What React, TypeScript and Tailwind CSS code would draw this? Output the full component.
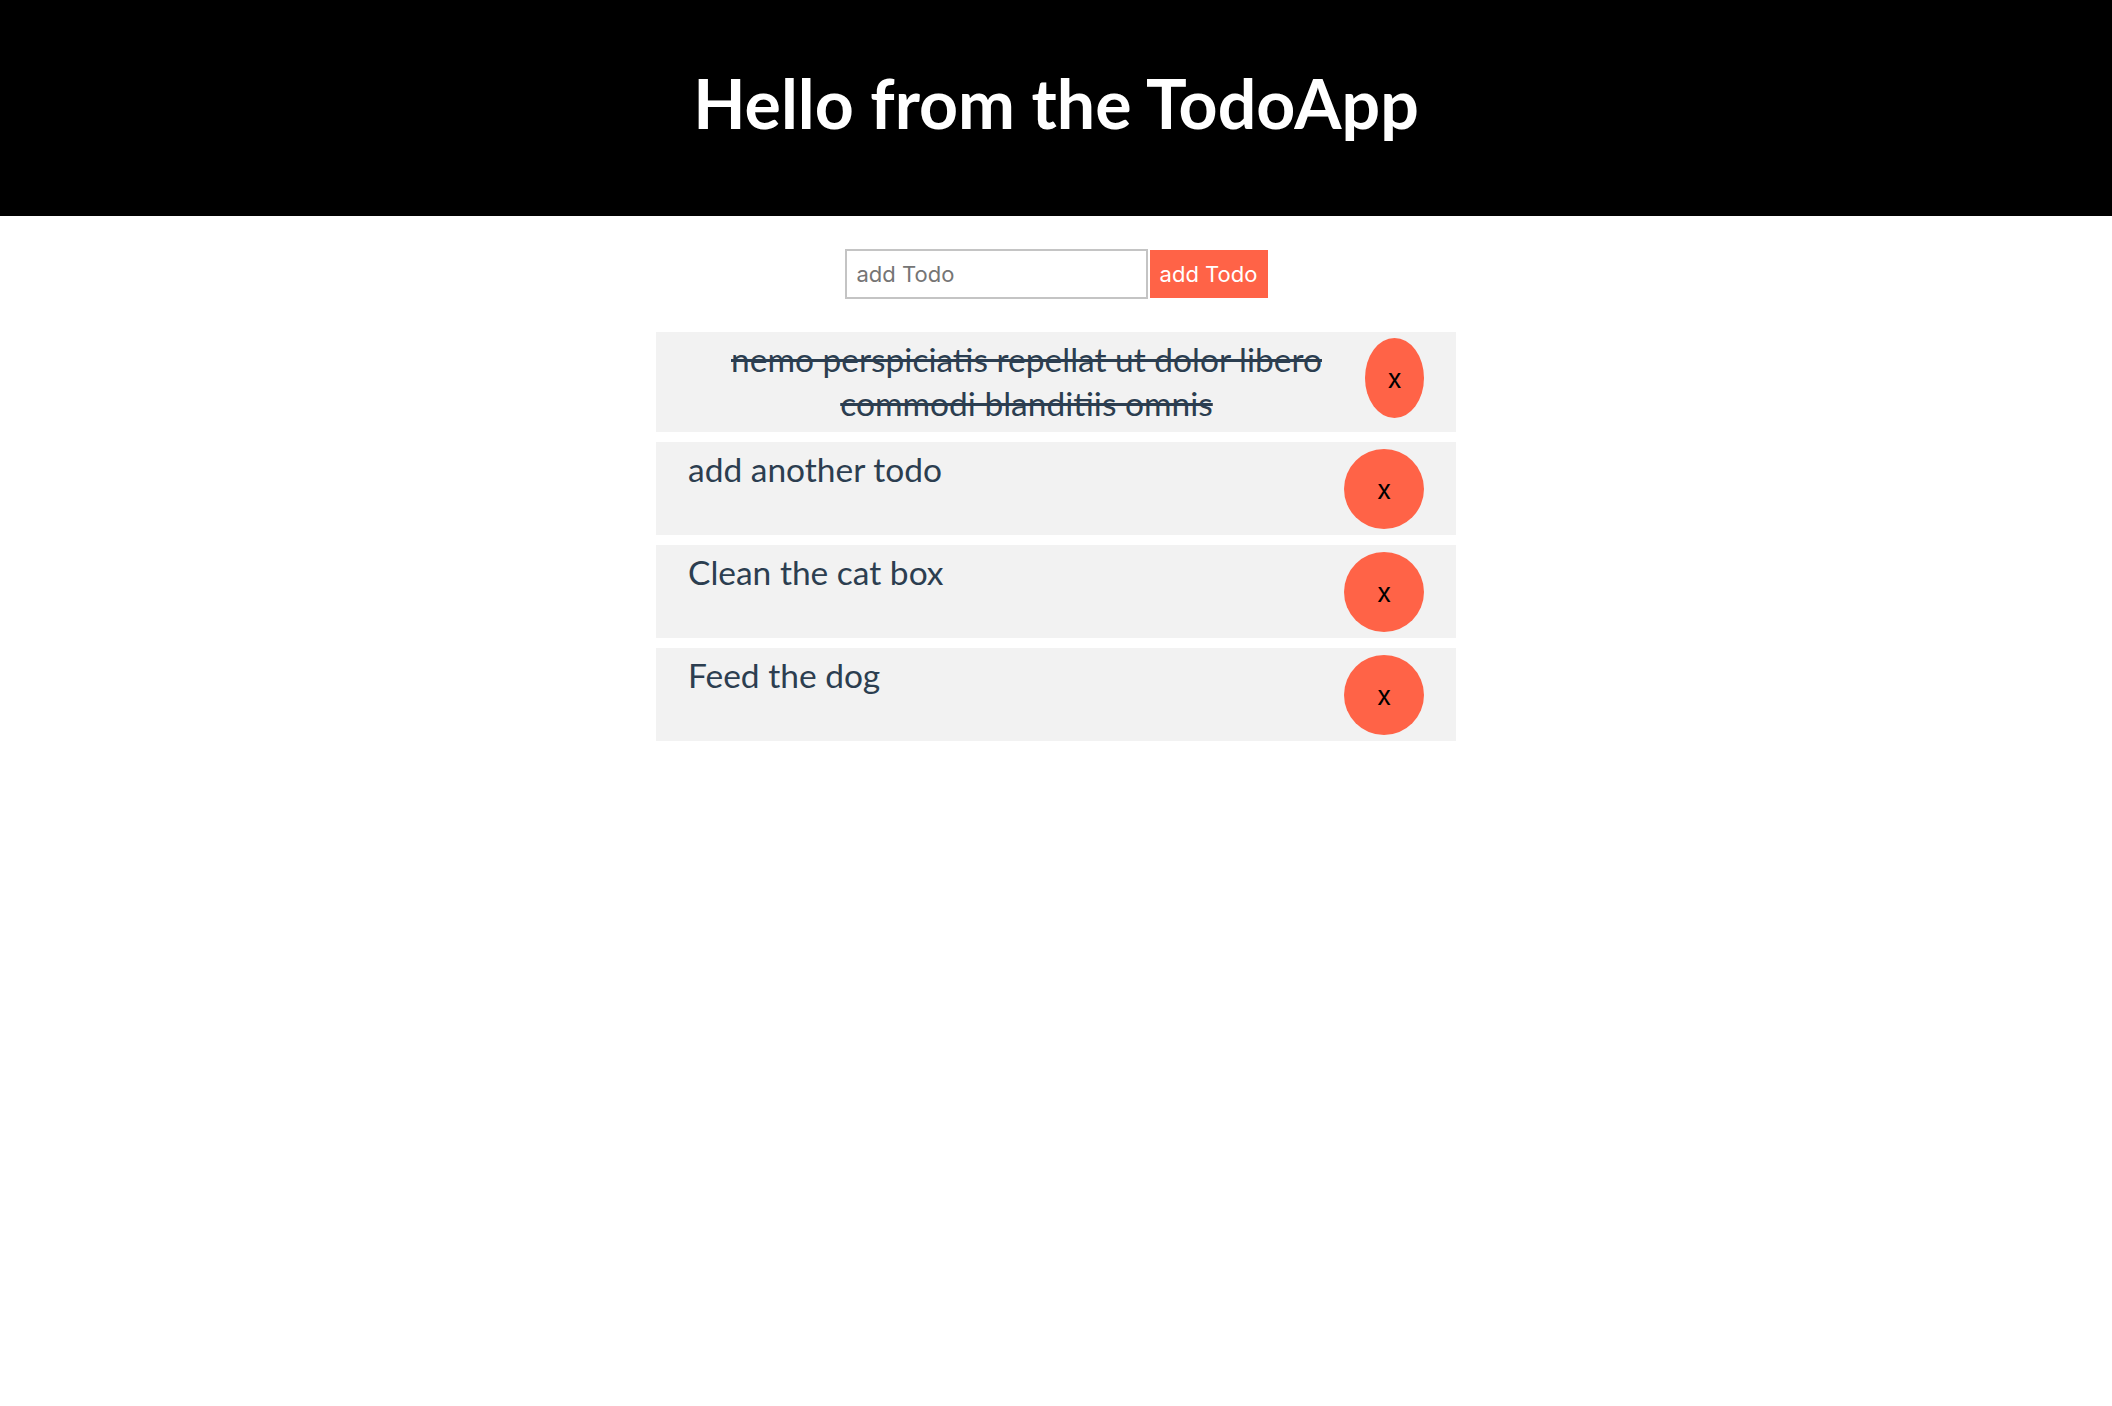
import React, { useState } from 'react'

type Todo = {
  id: number
  title: string
  completed: boolean
}

const App = () => {
  const [todos, setTodos] = useState<Todo[]>([
    { id: 1, title: 'nemo perspiciatis repellat ut dolor libero commodi blanditiis omnis', completed: true },
    { id: 2, title: 'add another todo', completed: false },
    { id: 3, title: 'Clean the cat box', completed: false },
    { id: 4, title: 'Feed the dog', completed: false },
  ])
  const [title, setTitle] = useState('')

  const addTodo = (e: React.FormEvent) => {
    e.preventDefault()
    if (!title) return
    setTodos([...todos, { id: Date.now(), title, completed: false }])
    setTitle('')
  }

  const removeTodo = (id: number) => {
    setTodos(todos.filter((t) => t.id !== id))
  }

  return (
    <div className="min-h-screen bg-white text-[#2c3e50] font-['Lato',sans-serif]">
      <header className="h-[216px] bg-black flex justify-center pt-[71px]">
        <h1 className="text-white text-[68px] leading-[64px] font-bold">Hello from the TodoApp</h1>
      </header>

      <form onSubmit={addTodo} className="flex justify-center items-start gap-[2px] mt-[33px]">
        <input
          type="text"
          placeholder="add Todo"
          value={title}
          onChange={(e) => setTitle(e.target.value)}
          className="w-[303px] h-[50px] border-2 border-[#c4c4c4] px-[10px] text-[22px] font-['Inter',sans-serif] text-black placeholder-[#757575] outline-none"
        />
        <button
          type="submit"
          className="w-[118px] h-[48px] mt-[1px] bg-[#ff6347] text-white text-[22px] font-['Inter',sans-serif]"
        >
          add Todo
        </button>
      </form>

      <ul className="w-[800px] mx-auto mt-[33px] flex flex-col gap-[10px]">
        {todos.map((todo) => (
          <li
            key={todo.id}
            className="flex justify-between items-start bg-[#f2f2f2] px-[32px] pt-[6px] pb-[6px]"
          >
            <p
              className={
                todo.completed
                  ? 'w-[677px] -mt-[1px] mb-[1px] text-center text-[33.5px] leading-[44px] line-through'
                  : '-mt-[1px] text-[33.5px] leading-[44px]'
              }
            >
              {todo.title}
            </p>
            <button
              onClick={() => removeTodo(todo.id)}
              className={`${todo.completed ? 'w-[59px]' : 'w-[80px] mt-[1px]'} h-[80px] shrink-0 rounded-[50%] bg-[#ff6347] text-black text-[26px] font-['Inter',sans-serif]`}
            >
              x
            </button>
          </li>
        ))}
      </ul>
    </div>
  )
}

export default App
